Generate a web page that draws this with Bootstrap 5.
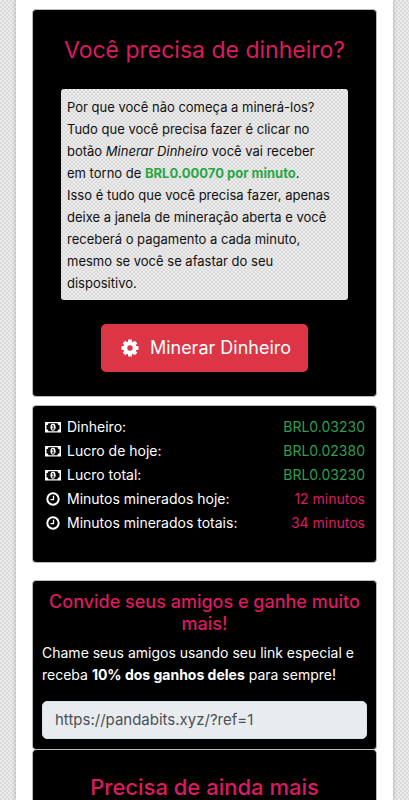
<!DOCTYPE html>
<html lang="pt-BR">
<head>
<meta charset="utf-8">
<meta name="viewport" content="width=device-width, initial-scale=1">
<title>Minerar Dinheiro</title>
<link href="https://cdn.jsdelivr.net/npm/bootstrap@5.3.0/dist/css/bootstrap.min.css" rel="stylesheet">
<style>
:root { --checker: repeating-conic-gradient(#dadada 0 25%, #ececec 0 50%) 0 0 / 4px 4px; --pink: #dc1a60; }
body { font-family: Inter, "Liberation Sans", sans-serif; font-size: 14px; line-height: 22px; background: var(--checker); overflow-x: hidden; }
.sheet { margin: 0 16px; padding: 9px 16px 0; min-height: 100vh; box-shadow: 0 0 4px rgba(0,0,0,.25); }
.panel { background: #000; color: #fff; border: 1px solid #bbb; border-radius: 4px; }
.pink { color: var(--pink); }
.money { color: #2f9e50; }
.gain { color: #28a745; }
.hero { padding: 25px 28px 24px; margin-bottom: 8px; }
.hero h1 { font-size: 23px; line-height: 30px; margin: 0 -8px 24px; font-weight: 400; }
.pitch { background: var(--checker); color: #111; border-radius: 3px; padding: 7px 14px 6px 6px; margin-bottom: 24px; font-size: 13px; }
.mine { background: #dc3545; color: #fff; font-size: 18px; line-height: 30px; padding: 9px 17px; border-radius: 5px; }
.mine:hover { background: #bb2d3b; color: #fff; }
.stats { padding: 9px 11px 27px; margin-bottom: 17px; }
.stats td, .stats th { line-height: 24px; padding: 0; font-weight: 400; }
.stats svg { width: 16px; height: 16px; margin: 0 6px 2px 1px; }
.invite { padding: 10px 9px; }
.panel h2 { font-size: 18px; line-height: 22px; font-weight: 500; margin-bottom: 7px; }
.invite p { margin-bottom: 15px; }
.invite .form-control { background: #e9ecef; color: #495057; font-size: 15px; line-height: 24px; padding: 6px 12px; border-radius: 5px; }
.panel.more { padding: 22px 9px 0; border-width: 0 1px; border-radius: 4px 4px 0 0; }
.panel.more h2 { font-size: 22px; line-height: 30px; margin: 0; }
</style>
<script src="https://cdn.jsdelivr.net/npm/bootstrap@5.3.0/dist/js/bootstrap.bundle.min.js" defer></script>
</head>
<body>
<svg class="d-none" aria-hidden="true">
<symbol id="bill" viewBox="0 0 16 16"><path fill="currentColor" fill-rule="evenodd" d="M0 3h16v10.500H0zM3.500 4.300A2 2 0 0 1 1.500 6.200v4.100a2 2 0 0 1 2 1.900h9a2 2 0 0 1 2-1.900V6.200a2 2 0 0 1-2-1.900z"/><ellipse cx="8" cy="8.250" rx="2.600" ry="3.400" fill="currentColor"/><path fill="none" stroke="#000" d="M7 6.700h1.200v3M6.800 10h2.700"/></symbol>
<symbol id="clock" viewBox="0 0 16 16"><circle cx="8" cy="8" r="5.700" fill="none" stroke="currentColor" stroke-width="2"/><path fill="none" stroke="currentColor" stroke-width="1.300" d="M8.500 4.700v4H5.500"/></symbol>
</svg>
<main class="sheet bg-white">
  <section class="panel hero text-center">
    <h1 class="pink">Você precisa de dinheiro?</h1>
    <div class="pitch text-start">Por que você não começa a minerá-los? Tudo que você precisa fazer é clicar no botão <em>Minerar Dinheiro</em> você vai receber em torno de <strong class="gain">BRL0.00070 por minuto</strong>.<br>Isso é tudo que você precisa fazer, apenas deixe a janela de mineração aberta e você receberá o pagamento a cada minuto, mesmo se você se afastar do seu dispositivo.</div>
    <button type="button" class="btn mine border-0 d-inline-flex align-items-center gap-2">
      <svg width="24" height="24" viewBox="0 0 24 24" aria-hidden="true"><g fill="currentColor"><path id="tooth" d="M10.200 3.500h3.600l.5 4h-4.600zM10.200 20.500h3.600l.5-4h-4.600z"/><use href="#tooth" transform="rotate(45 12 12)"/><use href="#tooth" transform="rotate(90 12 12)"/><use href="#tooth" transform="rotate(135 12 12)"/></g><circle cx="12" cy="12" r="4.600" fill="none" stroke="currentColor" stroke-width="3.800"/></svg>
      <span>Minerar Dinheiro</span>
    </button>
  </section>
  <section class="panel stats">
    <table class="w-100">
      <tbody>
      <tr><th scope="row"><svg aria-hidden="true"><use href="#bill"/></svg>Dinheiro:</th><td class="text-end money">BRL0.03230</td></tr>
      <tr><th scope="row"><svg aria-hidden="true"><use href="#bill"/></svg>Lucro de hoje:</th><td class="text-end money">BRL0.02380</td></tr>
      <tr><th scope="row"><svg aria-hidden="true"><use href="#bill"/></svg>Lucro total:</th><td class="text-end money">BRL0.03230</td></tr>
      <tr><th scope="row"><svg aria-hidden="true"><use href="#clock"/></svg>Minutos minerados hoje:</th><td class="text-end pink">12 minutos</td></tr>
      <tr><th scope="row"><svg aria-hidden="true"><use href="#clock"/></svg>Minutos minerados totais:</th><td class="text-end pink">34 minutos</td></tr>
      </tbody>
    </table>
  </section>
  <section class="panel invite">
    <h2 class="pink text-center">Convide seus amigos e ganhe muito mais!</h2>
    <p id="invite-text">Chame seus amigos usando seu link especial e receba <strong>10% dos ganhos deles</strong> para sempre!</p>
    <input class="form-control" type="text" value="https://pandabits.xyz/?ref=1" readonly aria-labelledby="invite-text">
  </section>
  <section class="panel more text-center">
    <h2 class="pink">Precisa de ainda mais</h2>
  </section>
</main>
</body>
</html>
